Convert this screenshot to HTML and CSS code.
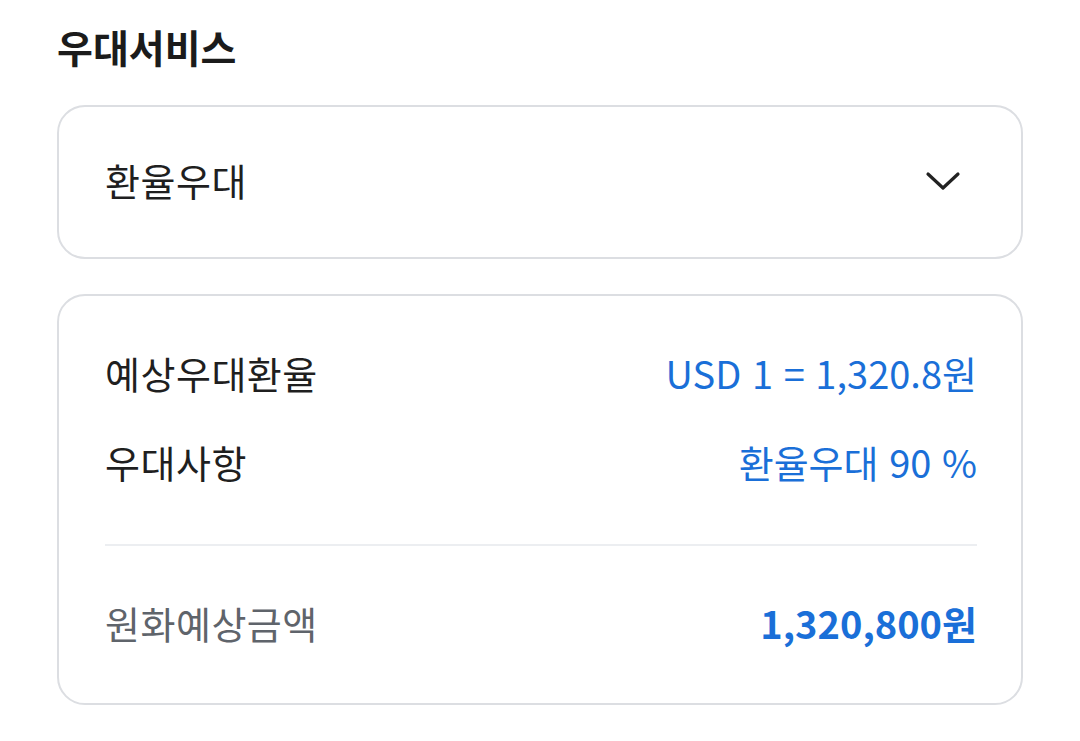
FILE: index.html
```html
<!DOCTYPE html>
<html lang="ko">
<head>
<meta charset="utf-8">
<link rel="stylesheet" href="styles.css">
</head>
<body>
<div class="page">
  <h2 class="title">우대서비스</h2>
  <div class="card select">
    <span class="select-label">환율우대</span>
    <svg class="chevron" width="36" height="36" viewBox="0 0 36 36"><path d="M3 11 L18 25 L33 11" fill="none" stroke="#222" stroke-width="3.2" stroke-linecap="round" stroke-linejoin="round"/></svg>
  </div>
  <div class="card info">
    <div class="row">
      <span class="label">예상우대환율</span>
      <span class="value">USD 1 = 1,320.8원</span>
    </div>
    <div class="row second">
      <span class="label">우대사항</span>
      <span class="value">환율우대 90 %</span>
    </div>
    <div class="divider"></div>
    <div class="row">
      <span class="label muted">원화예상금액</span>
      <span class="value strong">1,320,800원</span>
    </div>
  </div>
</div>
</body>
</html>
```

FILE: styles.css
```css
html, body {
  margin: 0;
  padding: 0;
  background: #ffffff;
}
body {
  font-family: "Noto Sans CJK KR", "Noto Sans", sans-serif;
  color: #1f1f1f;
}
.page {
  padding: 22px 57px 0 57px;
}
.title {
  margin: 0;
  font-size: 39px;
  line-height: 48px;
  font-weight: 700;
  color: #1b1b1b;
}
.card {
  box-sizing: border-box;
  border: 2px solid #dcdee2;
  border-radius: 28px;
  background: #fff;
}
.select {
  margin-top: 35px;
  height: 154px;
  display: flex;
  align-items: center;
  justify-content: space-between;
  padding: 0 60px 4px 46px;
}
.select-label {
  font-size: 38px;
  line-height: 48px;
  color: #1f1f1f;
  letter-spacing: 0.5px;
}
.chevron {
  display: block;
  margin-top: 2px;
}
.info {
  margin-top: 35px;
  padding: 53px 44px 56px 46px;
}
.row {
  display: flex;
  justify-content: space-between;
  align-items: center;
  height: 48px;
}
.row.second {
  margin-top: 41px;
}
.label {
  font-size: 38px;
  line-height: 48px;
  color: #1f1f1f;
  letter-spacing: 0.5px;
}
.label.muted {
  color: #5f646b;
}
.value {
  font-size: 38px;
  line-height: 48px;
  color: #1a6fd8;
}
.value.strong {
  font-weight: 600;
}
.divider {
  height: 2px;
  background: #eceef1;
  margin: 58px 0 53px 0;
}
```
